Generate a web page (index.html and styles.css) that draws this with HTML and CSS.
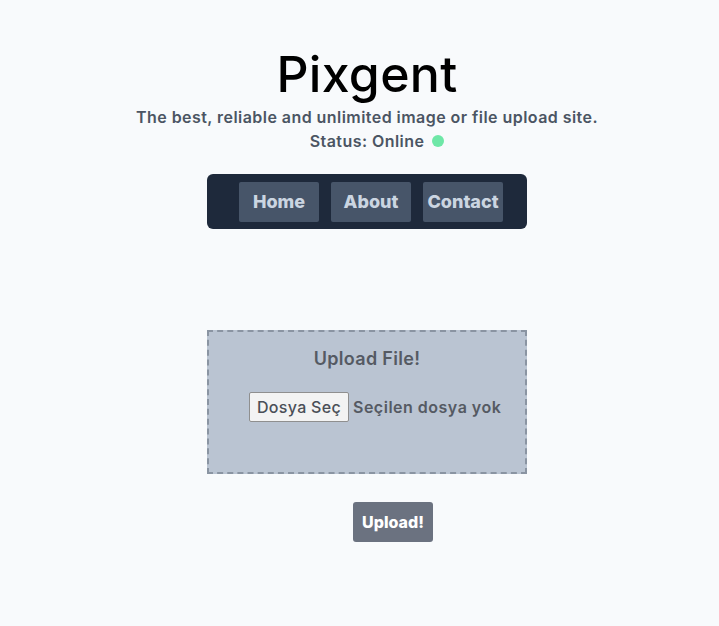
FILE: index.html
```html
<!DOCTYPE html>
<html lang="tr">
<head>
<meta charset="utf-8">
<title>Pixgent</title>
<link rel="stylesheet" href="styles.css">
</head>
<body>
<div class="page">
  <header class="hero">
    <h1 class="title">Pixgent</h1>
    <p class="subtitle">The best, reliable and unlimited image or file upload site.</p>
    <p class="status">Status: Online <span class="dot"></span></p>
  </header>
  <nav class="nav">
    <a class="nav-btn" href="#">Home</a>
    <a class="nav-btn" href="#">About</a>
    <a class="nav-btn" href="#">Contact</a>
  </nav>
  <main class="main">
    <form class="upload-form">
      <div class="dropzone">
        <h2 class="drop-title">Upload File!</h2>
        <div class="file-row">
          <label class="file-btn" for="file">Dosya Seç</label>
          <span class="file-name">Seçilen dosya yok</span>
          <input class="file-input" id="file" type="file">
        </div>
      </div>
      <button class="submit" type="button">Upload!</button>
    </form>
  </main>
</div>
</body>
</html>
```
FILE: styles.css
```css
* { box-sizing: border-box; }
html, body { margin: 0; padding: 0; }
body {
  background: #f8fafc;
  font-family: Inter, "Noto Sans", sans-serif;
  color: #4b5563;
  width: 719px;
  height: 626px;
  overflow: hidden;
}
.page {
  padding-left: 15px;
}
.hero {
  display: flex;
  flex-direction: column;
  align-items: center;
  padding-top: 43px;
}
.title {
  margin: 0;
  font-size: 50px;
  font-weight: 500;
  line-height: 62px;
  color: #000;
  letter-spacing: 0.3px;
}
.subtitle {
  margin: 0;
  font-size: 16px;
  font-weight: 600;
  line-height: 24px;
  color: #4b5563;
  letter-spacing: 0.45px;
}
.status {
  margin: 0;
  font-size: 16px;
  font-weight: 600;
  line-height: 24px;
  display: flex;
  align-items: center;
  gap: 8px;
  padding-left: 20px;
  letter-spacing: 0.45px;
}
.dot {
  width: 12px;
  height: 12px;
  border-radius: 50%;
  background: #6ee7a7;
  display: inline-block;
}
.nav {
  margin: 21px auto 0;
  width: 320px;
  height: 55px;
  background: #1e293b;
  border-radius: 6px;
  display: flex;
  align-items: center;
  gap: 12px;
  padding-left: 32px;
}
.nav-btn {
  width: 80px;
  height: 40px;
  background: #475569;
  color: #cbd5e1;
  font-weight: 800;
  font-size: 18px;
  text-decoration: none;
  display: flex;
  align-items: center;
  justify-content: center;
  border-radius: 2px;
  white-space: nowrap;
}
.main {
  padding-top: 101px;
}
.upload-form {
  width: 320px;
  margin: 0 auto;
  display: flex;
  flex-direction: column;
  align-items: flex-start;
}
.dropzone {
  width: 320px;
  height: 144px;
  background: #bac4d2;
  border: 2px dashed #8a94a2;
  display: flex;
  flex-direction: column;
  align-items: center;
  padding-top: 15px;
}
.drop-title {
  margin: 0;
  font-size: 18px;
  font-weight: 600;
  line-height: 24px;
  color: #555a63;
  letter-spacing: 0.3px;
}
.file-row {
  align-self: flex-start;
  margin: 21px 0 0 40px;
  display: flex;
  align-items: center;
  gap: 4px;
  font-size: 16px;
  font-weight: 600;
  color: #555a63;
  letter-spacing: 0.3px;
}
.file-name {
  letter-spacing: 0.5px;
}
.file-btn {
  height: 30px;
  width: 100px;
  background: #f3f3f3;
  border: 1px solid #8f8f8f;
  border-radius: 2px;
  display: flex;
  align-items: center;
  justify-content: center;
  color: #4a4f57;
  white-space: nowrap;
  font-weight: 500;
}
.file-input { display: none; }
.submit {
  margin: 28px 0 0 146px;
  width: 80px;
  height: 40px;
  background: #6b7280;
  border: 0;
  border-radius: 3px;
  color: #fff;
  font-family: inherit;
  font-size: 16px;
  font-weight: 800;
}
```
